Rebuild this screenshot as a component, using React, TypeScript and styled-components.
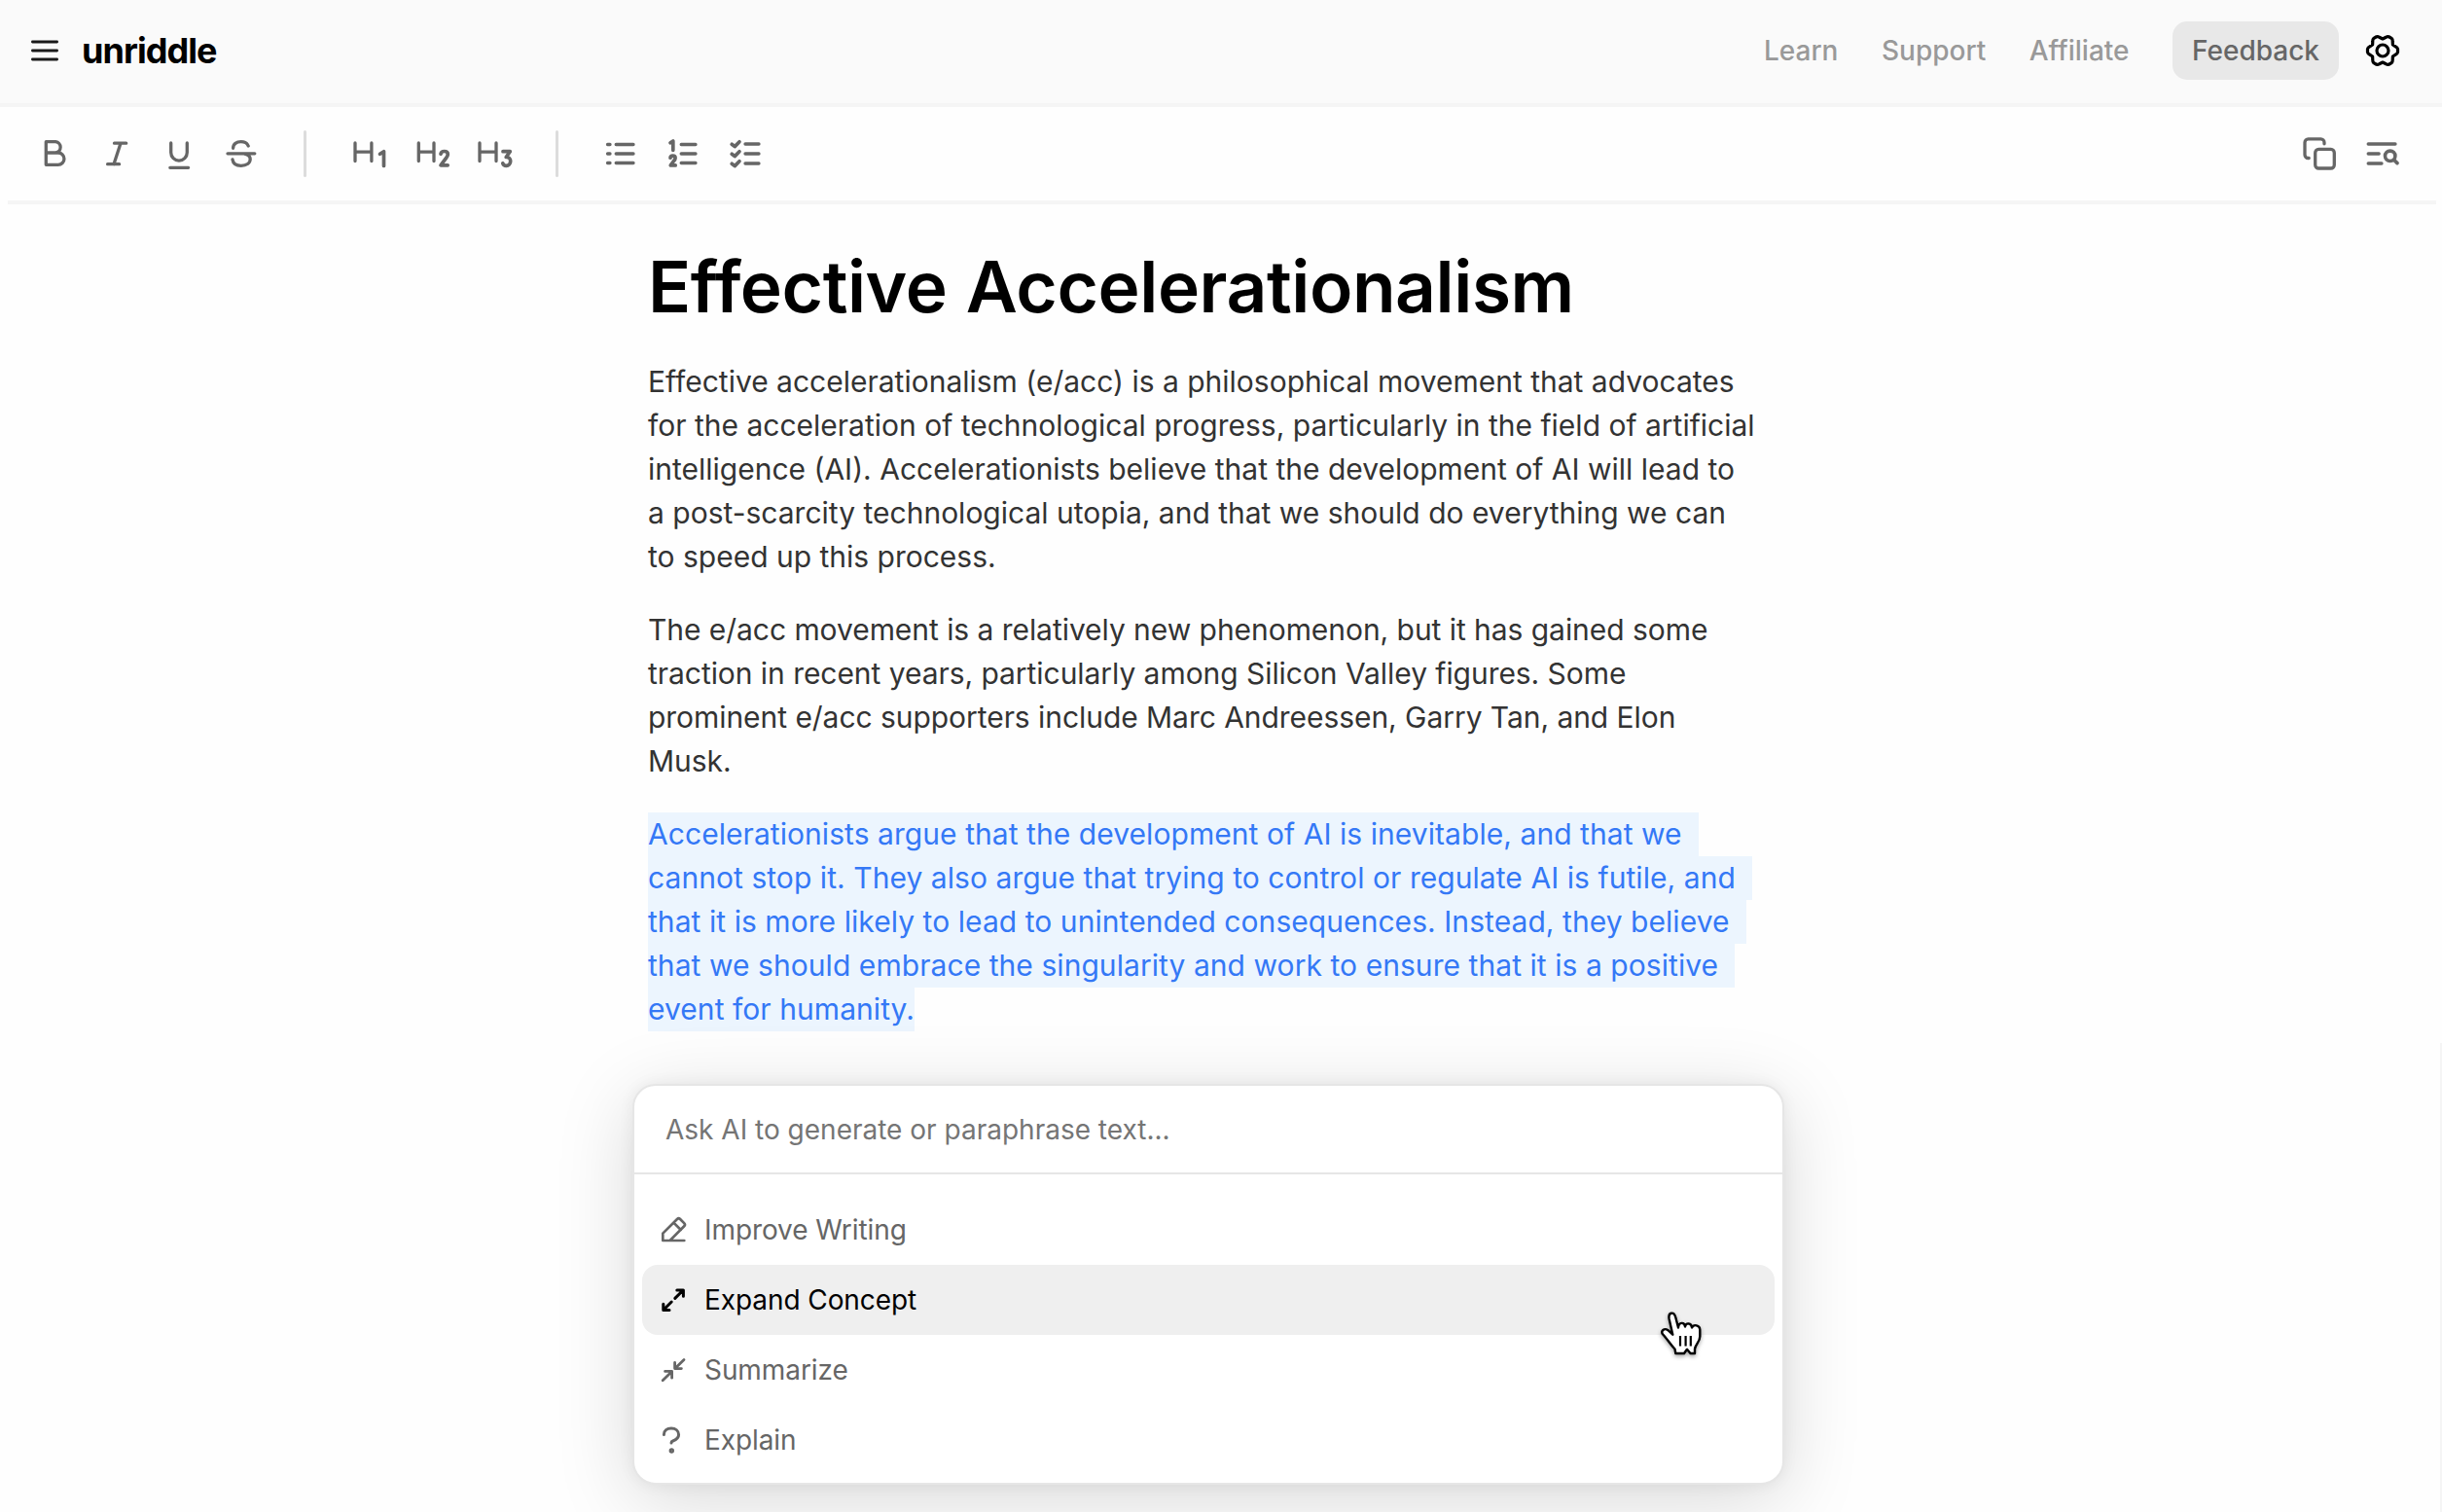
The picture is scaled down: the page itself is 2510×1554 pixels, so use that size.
import React from "react";
import styled, { createGlobalStyle } from "styled-components";

const GlobalStyle = createGlobalStyle`
  * { box-sizing: border-box; }
  html, body { margin: 0; padding: 0; background: #fefefe; }
  body {
    width: 2510px;
    height: 1554px;
    overflow: hidden;
    font-family: Inter, "Liberation Sans", sans-serif;
    -webkit-font-smoothing: antialiased;
  }
`;

const Page = styled.div`
  position: relative;
  width: 2510px;
  height: 1554px;
  overflow: hidden;
  background: #fefefe;
`;

const Header = styled.header`
  display: flex;
  align-items: center;
  height: 110px;
  padding: 0 40px 2px 26px;
  background: #fafafa;
  border-bottom: 4px solid #f5f5f5;
`;

const Brand = styled.div`
  display: flex;
  align-items: center;
  gap: 18px;
  flex: 1;
`;

const Logo = styled.span`
  font-size: 36px;
  line-height: 44px;
  font-weight: 700;
  letter-spacing: -0.95px;
  color: #000;
`;

const Nav = styled.nav`
  display: flex;
  align-items: center;
  gap: 44.5px;
`;

const NavLink = styled.a`
  font-size: 28px;
  line-height: 34px;
  font-weight: 500;
  color: #999;
`;

const FeedbackButton = styled.button`
  width: 171px;
  height: 60px;
  border: 0;
  padding: 0;
  border-radius: 15px;
  background: #e8e8e8;
  color: #666;
  font: 500 28px/34px Inter, "Liberation Sans", sans-serif;
`;

const SettingsButton = styled.span`
  display: flex;
  margin: 0 1px 0 25px;
`;

const Toolbar = styled.div`
  display: flex;
  align-items: center;
  height: 100px;
  margin: 0 6px 0 8px;
  padding: 0 23px 0 16px;
  border-bottom: 4px solid #f5f5f5;
`;

const ToolGroup = styled.div<{ $push?: boolean }>`
  display: flex;
  margin-left: ${(p) => (p.$push ? "auto" : "0")};
`;

const ToolButton = styled.span`
  display: flex;
  align-items: center;
  justify-content: center;
  width: 64px;
  height: 64px;
`;

const Separator = styled.i`
  width: 3px;
  height: 48px;
  margin: 0 31px 0 32px;
  border-radius: 2px;
  background: #dcdcdc;

  & + ${ToolGroup} {
    padding-left: 1px;
  }
`;

const Stroke = styled.svg<{ $color?: string; $width?: number }>`
  display: block;
  flex: none;
  overflow: visible;
  fill: none;
  stroke: ${(p) => p.$color || "#666"};
  stroke-width: ${(p) => p.$width || 3.3};
  stroke-linecap: round;
  stroke-linejoin: round;
`;

const Editor = styled.main`
  padding: 41px 0 0 666px;
`;

const Title = styled.h1`
  margin: 0 0 31px;
  font-size: 73px;
  line-height: 88px;
  font-weight: 600;
  letter-spacing: -0.45px;
  word-spacing: 1.5px;
  color: #000;
  white-space: nowrap;
`;

const Paragraph = styled.p<{ $selected?: boolean; $tracking?: number }>`
  margin: 0 0 30px;
  font-size: 30px;
  line-height: 45px;
  letter-spacing: ${(p) => p.$tracking || 0}px;
  color: ${(p) => (p.$selected ? "#3478f6" : "#333")};
`;

const Line = styled.span<{ $selected?: boolean }>`
  display: block;
  width: max-content;
  white-space: pre;
  background: ${(p) => (p.$selected ? "#ecf5fe" : "transparent")};
`;

const Panel = styled.section`
  width: 1184px;
  height: 412px;
  margin: 54px 0 0 -16px;
  border: 2px solid #e6e6e6;
  border-radius: 24px;
  background: #fff;
  box-shadow: 0 16px 80px rgba(0, 0, 0, 0.15), 0 0 16px rgba(0, 0, 0, 0.06);
`;

const Prompt = styled.div`
  height: 91px;
  padding: 28px 32px 0;
  border-bottom: 2px solid #e6e6e6;
  font-size: 28px;
  line-height: 34px;
  color: #757575;
`;

const Menu = styled.div`
  display: flex;
  flex-direction: column;
  padding: 21px 8px 8px;
`;

const MenuItem = styled.div<{ $active?: boolean }>`
  display: flex;
  align-items: center;
  gap: 16px;
  height: 72px;
  padding-left: 16px;
  border-radius: 16px;
  font-size: 28px;
  line-height: 34px;
  letter-spacing: -0.08px;
  color: ${(p) => (p.$active ? "#000" : "#666")};
  background: ${(p) => (p.$active ? "#efefef" : "transparent")};
`;

const ScrollTrack = styled.div`
  position: absolute;
  right: 0;
  top: 1072px;
  bottom: 0;
  width: 2px;
  background: #f5f5f5;
`;

const Pointer = styled.svg`
  position: absolute;
  left: 1700px;
  top: 1340px;
  overflow: visible;
  filter: drop-shadow(0 2px 2px rgba(0, 0, 0, 0.35));
`;

const Tool = ({ d, bold, children }: { d: string; bold?: string; children?: React.ReactNode }) => (
  <ToolButton>
    <Stroke width="40" height="40" viewBox="0 0 40 40">
      <path d={d} />
      {bold && <path d={bold} strokeWidth={3.7} />}
      {children}
    </Stroke>
  </ToolButton>
);

const point = (deg: number, r: number) => {
  const a = (deg * Math.PI) / 180;
  return `${(r * Math.cos(a)).toFixed(2)} ${(r * Math.sin(a)).toFixed(2)}`;
};

const gearPath =
  [0, 1, 2, 3, 4, 5]
    .map((k) => {
      const a = -90 + k * 60;
      return `${k ? "L" : "M"}${point(a, 12)}L${point(a + 14, 14.2)}Q${point(a + 18, 15.4)} ${point(a + 24, 15.6)}L${point(a + 36, 15.6)}Q${point(a + 42, 15.4)} ${point(a + 46, 14.2)}`;
    })
    .join("") + "Z";

const actions = [
  {
    label: "Improve Writing",
    width: 2.7,
    d: "M13 27H5.3V19.6L20 5a2.2 2.2 0 0 1 3.1 0l4.1 4.1a2.2 2.2 0 0 1 0 3.1L12.6 27H27.3M16.4 8.6l7.4 7.4",
  },
  {
    label: "Expand Concept",
    active: true,
    width: 3,
    d: "M19.8 5.9H26.4V12.2M26.2 6L17.8 14.4M5.8 20.2V26.4H12M6 26.2L14.2 18",
  },
  {
    label: "Summarize",
    width: 2.8,
    d: "M17.6 8.4V14.6H24.4M17.8 14.4L27 5.4M7.6 17.4H14.6V24.2M14.4 17.8L5.2 26.8",
  },
  {
    label: "Explain",
    width: 3,
    d: "M6.4 10.4C6.4 6.2 9.6 4 14 4s7.6 2.6 7.6 6.6c0 4.2-3.2 5.4-6 6.4-1.1.4-1.6.9-1.6 2",
    dot: true,
  },
];

const first = [
  "Effective accelerationalism (e/acc) is a philosophical movement that advocates",
  "for the acceleration of technological progress, particularly in the field of artificial",
  "intelligence (AI). Accelerationists believe that the development of AI will lead to",
  "a post-scarcity technological utopia, and that we should do everything we can",
  "to speed up this process.",
];
const second = [
  "The e/acc movement is a relatively new phenomenon, but it has gained some",
  "traction in recent years, particularly among Silicon Valley figures. Some",
  "prominent e/acc supporters include Marc Andreessen, Garry Tan, and Elon",
  "Musk.",
];
const third = [
  "Accelerationists argue that the development of AI is inevitable, and that we  ",
  "cannot stop it. They also argue that trying to control or regulate AI is futile, and  ",
  "that it is more likely to lead to unintended consequences. Instead, they believe  ",
  "that we should embrace the singularity and work to ensure that it is a positive  ",
  "event for humanity.",
];

const Block = ({ lines, selected, tracking }: { lines: string[]; selected?: boolean; tracking?: number }) => (
  <Paragraph $selected={selected} $tracking={tracking}>
    {lines.map((l) => (
      <Line key={l} $selected={selected}>{l}</Line>
    ))}
  </Paragraph>
);

export default function App() {
  return (
    <>
      <GlobalStyle />
      <Page>
        <Header>
          <Brand>
            <Stroke width="40" height="40" viewBox="0 0 40 40" $color="#1a1a1a" $width={2.8}>
              <path d="M7.4 11H32.6M7.4 20H32.6M7.4 29H32.6" />
            </Stroke>
            <Logo>unriddle</Logo>
          </Brand>
          <Nav>
            <NavLink>Learn</NavLink>
            <NavLink>Support</NavLink>
            <NavLink>Affiliate</NavLink>
            <FeedbackButton>Feedback</FeedbackButton>
          </Nav>
          <SettingsButton>
            <Stroke width="40" height="40" viewBox="-20 -20 40 40" $color="#000" $width={3.2}>
              <path d={gearPath} />
              <circle r="6" />
            </Stroke>
          </SettingsButton>
        </Header>

        <Toolbar>
          <ToolGroup>
            <Tool d="M11.3 7.7h9.9a5.7 5.7 0 0 1 0 11.3h-9.9M21 19h2.8a6.1 6.1 0 0 1 0 12.3H11.3V7.7" />
            <Tool d="M17.5 9.2H29.7M10.6 30.7H22.6M24 9.2L17 30.7" />
            <Tool d="M11.7 9V18.8a8.3 8.3 0 0 0 16.6 0V9M10.8 34.3H29.6" />
            <Tool d="M6 19.8H33.8M11.6 14.3C11.6 10 15 7.6 19.8 7.6c3.8 0 6.4 1.6 7.4 4.4M11 26c.6 4 4 6.3 8.8 6.3 5.4 0 9.4-2.6 9.4-6.7 0-3.6-2.6-5-6.4-5.8" />
          </ToolGroup>
          <Separator />
          <ToolGroup>
            <Tool d="M6 9V27.5M22.9 9V27.5M6 18.2H22.9" bold="M31.5 20.2L35.5 17.7V32.4" />
            <Tool d="M7.3 9V27.5M23 9V27.5M7.3 18.2H23" bold="M30 20.3C30.5 18.3 32 17.5 33.6 17.5c2.2 0 3.7 1.3 3.7 3.2 0 1.5-.8 2.7-2.3 4.5L30 31.8H37.2" />
            <Tool d="M6 9V27.5M23 9V27.5M6 18.2H23" bold="M30 17.7H37.3L33.2 23.5C36 23.3 37.7 25 37.7 27.6c0 2.9-1.9 4.7-4.3 4.7-1.8 0-3-.8-3.6-2.5" />
          </ToolGroup>
          <Separator />
          <ToolGroup>
            <Tool d="M6.5 10.5H9M6.5 20H9M6.5 29.5H9M15.2 10.5H33M15.2 20H33M15.2 29.5H33" />
            <Tool d="M18.2 10.5H33M18.2 20H33M18.2 29.5H33" bold="M7 8.8L9.8 7V16.3M7 24.2C7.2 22.8 8.2 22.2 9.4 22.2c1.6 0 2.7.9 2.7 2.3 0 1.1-.7 2-1.6 3L7.3 31.9H12.2" />
            <Tool d="M20 10H34M20 20H34M20 30H34" bold="M6.2 10.3L9.2 12.6 14 7.8M6.2 20.3L9.2 22.6 14 17.8M6.2 30.3L9.2 32.6 14 27.8" />
          </ToolGroup>
          <ToolGroup $push>
            <Tool d="M24 9.8V8.4a3.5 3.5 0 0 0-3.5-3.5H7.5a3.5 3.5 0 0 0-3.5 3.5V21a3.5 3.5 0 0 0 3.5 3.5H8.2">
              <rect x="14.7" y="15.4" width="19.6" height="19.6" rx="3.5" />
            </Tool>
            <Tool d="M5.2 10H33M5.2 20H16.2M5.2 30H19" bold="M31.8 26.5L35 29.6">
              <circle cx="27.7" cy="22.3" r="5.2" strokeWidth={3.6} />
            </Tool>
          </ToolGroup>
        </Toolbar>

        <Editor>
          <Title>Effective Accelerationalism</Title>
          <Block lines={first} />
          <Block lines={second} tracking={-0.05} />
          <Block lines={third} tracking={0.06} selected />
          <Panel>
            <Prompt>Ask AI to generate or paraphrase text...</Prompt>
            <Menu>
              {actions.map((a) => (
                <MenuItem key={a.label} $active={a.active}>
                  <Stroke width="32" height="32" viewBox="0 0 32 32" $color={a.active ? "#000" : "#666"} $width={a.width}>
                    <path d={a.d} />
                    {a.dot && <circle cx="14.3" cy="27" r="1.2" />}
                  </Stroke>
                  {a.label}
                </MenuItem>
              ))}
            </Menu>
          </Panel>
        </Editor>

        <ScrollTrack />
        <Pointer width="56" height="60" viewBox="0 0 56 60">
          <path
            d="M19.3 31.7L15.7 16C14.2 8.5 20.5 7.5 22.3 14L25 24.5C25.5 18.5 31.5 18.5 32 23.5C33 19 38.5 19.5 39 24.5C41 20.5 47 22 47.3 26.5V33.5C47.3 39 42.5 42 42 46.5V51H37.5L34 46.8 31 51H22.3L21.5 46.5C17.5 42.5 13.5 36 9.2 31.5C6.5 28 10.5 24.5 14.5 27.2Z"
            fill="#fff"
            stroke="#000"
            strokeWidth="2.4"
            strokeLinejoin="round"
          />
          <path d="M27 33V43.5M32.6 33V43.5M37.8 33V43.5" stroke="#000" strokeWidth="2.2" />
        </Pointer>
      </Page>
    </>
  );
}
